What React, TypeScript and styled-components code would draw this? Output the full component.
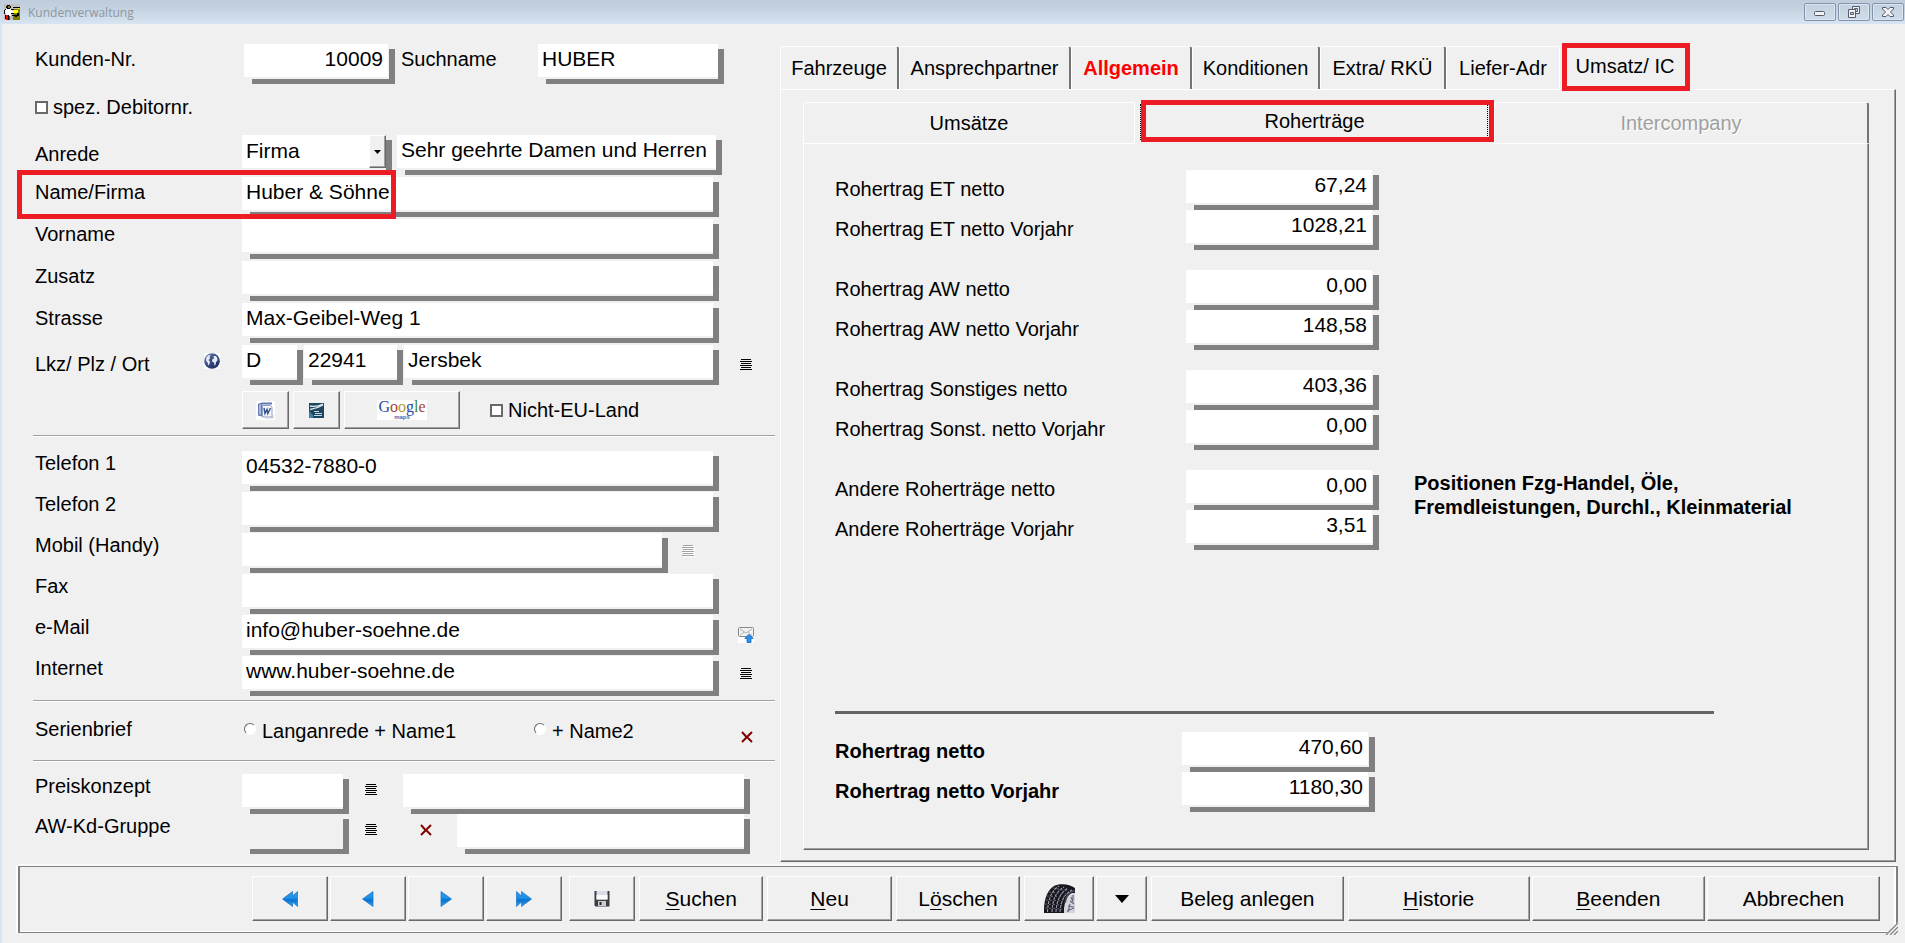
import React from 'react';
import styled, { createGlobalStyle, css } from 'styled-components';

const face = '#f0f0f0';
const shade = '#808080';
const mark = '#ed1c24';

const GlobalStyle = createGlobalStyle`
  *, *::before, *::after { box-sizing: border-box; }
  body { margin: 0; background: ${face}; }
  body, input, select, button { font-family: "Liberation Sans", Arial, sans-serif; color: #000; }
  svg { display: block; }
`;

/* ---------- window frame ---------- */

const Window = styled.div`
  display: flex;
  flex-direction: column;
  min-height: 100vh;
  min-width: 1480px;
  border-left: 2px solid #d7e4f2;
  background: ${face};
  font-size: 20px;
  line-height: 24px;
`;

const TitleBar = styled.header`
  display: flex;
  align-items: center;
  gap: 8px;
  height: 24px;
  margin-left: -2px;
  padding: 0 1px 0 4px;
  background: linear-gradient(#bfcddb, #c5d2e0 40%, #d7e4f2);
`;

const Title = styled.h1`
  flex: 1;
  margin: 0;
  padding-top: 2px;
  font: 400 12px/16px "Open Sans", "Noto Sans", sans-serif;
  color: #8e979f;
`;

const WindowButtons = styled.div`
  display: flex;
  gap: 2px;
`;

const WindowButton = styled.button`
  display: grid;
  place-items: center;
  width: 32px;
  height: 18px;
  padding: 0;
  border: 1px solid #8393ac;
  border-radius: 2px;
  background: linear-gradient(#c3d0de, #cfdcea);
  box-shadow: inset 0 0 0 1px #dbe6f1;
`;

const Main = styled.main`
  flex: 1;
  display: flex;
`;

/* ---------- shared controls ---------- */

const FieldFrame = styled.span<{ $w?: number; $gap?: number }>`
  display: flex;
  ${p => (p.$w ? css`flex: 0 0 ${p.$w}px;` : css`flex: 1;`)}
  min-width: 0;
  height: 40px;
  padding: 0 ${p => p.$gap ?? 6}px 7px 0;
  background:
    linear-gradient(${shade}, ${shade}) right bottom / 6px calc(100% - 5px) no-repeat,
    linear-gradient(${shade}, ${shade}) right bottom / calc(100% - 8px) 5px no-repeat;
`;

const Input = styled.input<{ $right?: boolean; $flat?: boolean }>`
  flex: 1;
  width: 100%;
  min-width: 0;
  height: 33px;
  padding: 0 5px 3px 4px;
  border: 0;
  border-radius: 0;
  outline: none;
  background: ${p => (p.$flat ? face : '#fff')};
  font-size: 21px;
  text-align: ${p => (p.$right ? 'right' : 'left')};
`;

const SelectBox = styled.span`
  position: relative;
  display: flex;
  flex: 1;
  height: 33px;
`;

const Select = styled.select`
  appearance: none;
  flex: 1;
  padding: 0 20px 3px 4px;
  border: 0;
  border-radius: 0;
  outline: none;
  background: #fff;
  font-size: 21px;
`;

const bevel = css`
  border: 1px solid;
  border-color: #fff #696969 #696969 #fff;
  box-shadow: inset -1px -1px 0 #a0a0a0;
  background: ${face};
`;

const SelectArrow = styled.span`
  position: absolute;
  top: 0;
  right: 0;
  bottom: 0;
  width: 17px;
  display: grid;
  place-items: center;
  pointer-events: none;
  ${bevel}
`;

const BevelButton = styled.button<{ $w: number; $h: number; $grow?: boolean }>`
  display: flex;
  align-items: center;
  justify-content: center;
  flex: ${p => (p.$grow ? `1 1 ${p.$w}px` : 'none')};
  width: ${p => p.$w}px;
  height: ${p => p.$h}px;
  padding: 0;
  border-radius: 0;
  font-size: 21px;
  line-height: 24px;
  white-space: nowrap;
  ${bevel}

  u { text-underline-offset: 3px; text-decoration-thickness: 1px; text-decoration-skip-ink: none; }
`;

const PlainButton = styled.button<{ $ml?: number; $top?: number }>`
  flex: none;
  padding: 0;
  border: 0;
  background: none;
  margin: ${p => p.$top ?? 14}px 0 0 ${p => p.$ml ?? 0}px;
  align-self: flex-start;
`;

const CheckLabel = styled.label<{ $ml?: number }>`
  display: flex;
  align-items: center;
  gap: 5px;
  margin-left: ${p => p.$ml ?? 0}px;
`;

const Checkbox = styled.input`
  appearance: none;
  width: 13px;
  height: 13px;
  margin: 0;
  border: 2px solid #696969;
  background: #fff;
`;

const Radio = styled.input`
  appearance: none;
  width: 12px;
  height: 12px;
  margin: 0 0 4px;
  border: 1px solid;
  border-color: #696969 #fff #fff #696969;
  border-radius: 50%;
  background: #fff;
`;

const highlight = css`
  content: '';
  position: absolute;
  z-index: 2;
  border: 5px solid ${mark};
  pointer-events: none;
`;

/* ---------- customer form ---------- */

const CustomerForm = styled.form`
  flex: 0 0 778px;
  padding: 20px 5px 0 33px;
`;

const RowStack = styled.div<{ $gap: number }>`
  display: flex;
  flex-direction: column;
  gap: ${p => p.$gap}px;
`;

const Row = styled.div<{ $marked?: boolean }>`
  position: relative;
  display: flex;
  ${p => p.$marked && css`
    &::after { ${highlight} left: -18px; top: -7px; width: 379px; height: 49px; }
  `}
`;

const RowLabel = styled.label<{ $top?: number; $w?: number }>`
  flex: 0 0 ${p => p.$w ?? 207}px;
  padding-top: ${p => p.$top ?? 3}px;
  white-space: nowrap;
`;

const FieldGroup = styled.div<{ $gap?: number; $w?: number }>`
  display: flex;
  flex: 0 0 ${p => p.$w ?? 477}px;
  gap: ${p => p.$gap ?? 0}px;
`;

const DebitorRow = styled.div`
  display: flex;
  margin: 11px 0 16px;
`;

const LabelWithIcon = styled.div`
  display: flex;
  flex: 0 0 207px;
`;

const LinkRow = styled.div`
  display: flex;
  align-items: center;
  gap: 4px;
  margin: 6px 0 6px 207px;
`;

const Separator = styled.hr<{ $mt?: number; $mb?: number }>`
  margin: ${p => p.$mt ?? 0}px 0 ${p => p.$mb ?? 0}px -2px;
  height: 2px;
  border: 0;
  border-top: 1px solid #a0a0a0;
  background: #fff;
`;

const MailingRow = styled.fieldset`
  display: flex;
  align-items: center;
  height: 58px;
  margin: 0;
  padding: 0;
  border: 0;
`;

const MailingTitle = styled.span`
  flex: 0 0 209px;
  margin-bottom: 4px;
`;

const RadioLabel = styled.label<{ $w: number }>`
  display: flex;
  align-items: center;
  gap: 6px;
  flex: 0 0 ${p => p.$w}px;
  white-space: nowrap;
`;

const GoogleLogo = styled.span`
  display: flex;
  flex-direction: column;
  align-items: center;
  width: 50px;
  height: 20px;
  background: #fff;
  font: 16px/14px "Liberation Serif", serif;
`;

const GoogleMaps = styled.small`
  font: 700 6px/6px "Liberation Sans", sans-serif;
  color: #4a68b0;
`;

const Letter = styled.span<{ $c: string }>`
  color: ${p => p.$c};
`;

/* ---------- tab control ---------- */

const TabControl = styled.section`
  flex: 1;
  display: flex;
  flex-direction: column;
  min-width: 0;
  margin: 22px 9px 4px 0;
`;

const TabList = styled.div<{ $h: number }>`
  display: flex;
  height: ${p => p.$h}px;
`;

const Tab = styled.button<{ $w: number; $grow?: boolean; $state?: 'alert' | 'selected' | 'disabled' | 'beforeSelected' }>`
  position: relative;
  flex: ${p => (p.$grow ? p.$w : 0)} 1 ${p => p.$w}px;
  padding: 0;
  border: 1px solid #fff;
  border-right: 2px solid #747474;
  border-bottom: 0;
  border-radius: 3px 3px 0 0;
  background: ${face};
  font-size: 20px;
  line-height: 24px;
  white-space: nowrap;

  ${p => p.$state === 'alert' && css`color: #f00; font-weight: 700;`}
  ${p => p.$state === 'disabled' && css`color: #a0a0a0; text-shadow: 1px 1px 0 #fff;`}
  ${p => p.$state === 'beforeSelected' && css`border-right: 1px solid #fff;`}
  ${p => p.$state === 'selected' && css`
    padding-bottom: 4px;
    border: 0;
    margin-bottom: -1px;
    z-index: 1;
    &::after { ${highlight} inset: -3px 0 -1px 2px; }
  `}
`;

const InnerTab = styled(Tab)`
  ${p => p.$state === 'selected' && css`
    &::before {
      content: '';
      position: absolute;
      inset: 2px 6px 4px 5px;
      border: 1px dotted #000;
    }
    &::after { inset: -2px 0 2px 6px; }
  `}
`;

const TabPanel = styled.div`
  flex: 1;
  display: flex;
  flex-direction: column;
  border: 1px solid #fff;
  border-right: 1px solid #696969;
  border-bottom: 1px solid #696969;
  box-shadow: inset -1px -1px 0 #a0a0a0;
`;

const OuterPanel = styled(TabPanel)`
  padding: 12px 26px 11px 22px;
`;

const InnerPanel = styled(TabPanel)`
  padding: 26px 30px 37px 31px;
`;

const YieldPair = styled.div`
  display: flex;
  margin-bottom: 20px;
`;

const YieldRows = styled.div`
  flex: none;
`;

const Note = styled.p`
  margin: 1px 0 0 35px;
  font-weight: 700;
`;

const YieldLabel = styled(RowLabel)<{ $bold?: boolean }>`
  font-weight: ${p => (p.$bold ? 700 : 400)};
`;

const TotalLine = styled.hr`
  height: 3px;
  margin: auto 124px 18px 0;
  border: 0;
  background: #646464;
`;

/* ---------- toolbar ---------- */

const Toolbar = styled.footer`
  position: relative;
  display: flex;
  gap: 4px;
  height: 67px;
  margin: 0 7px 10px 16px;
  padding: 9px 16px 0 232px;
  border: solid ${shade};
  border-width: 1px 2px;
  box-shadow: -2px 0 0 #fff, 0 -2px 0 #fafafa, inset -2px -1px 0 #fff;
`;

const ButtonGroup = styled.div<{ $w?: number }>`
  display: flex;
  gap: 2px;
  flex: ${p => (p.$w ? `1 1 ${p.$w}px` : 'none')};
`;

const NavGroup = styled(ButtonGroup)`
  padding-right: 3px;
`;

const Grip = styled.span`
  position: absolute;
  right: -2px;
  bottom: -3px;
`;

/* ---------- icons ---------- */

const AppIcon = () => (
  <svg width="16" height="16" viewBox="0 0 16 16" shapeRendering="crispEdges" aria-hidden="true">
    <rect width="16" height="16" fill="#c0c0c0" />
    <rect x="9" y="5" width="7" height="11" fill="#808000" />
    <path d="M3 1h3v1h1v2h-1v1h-3v-1h-1v-2h1z" fill="#000" />
    <rect x="4" y="2" width="2" height="2" fill="#808000" />
    <path d="M1 5h7v2h2v2h-3v3h-5v-3h-2v-3h1z" fill="#fff" />
    <path d="M0 6h1v4h-1zM1 5h1v1h-1zM7 5h3v1h-3zM7 9h3v1h-3zM9 3h7v1h-7zM8 11h5v2h-2v-1h-3zM13 9h2v3h-2z" fill="#000" />
    <path d="M9 6h5v3h-4zM14 4h1v1h-1z" fill="#ff0" />
    <path d="M2 11h2v5h-2zM5 12h1v4h-1z" fill="#f00" />
    <path d="M1 11h1v4h-1zM4 11h1v5h-1z" fill="#000" />
  </svg>
);

const MinimizeIcon = () => (
  <svg width="12" height="12" viewBox="0 0 12 12" aria-hidden="true">
    <rect x="0.5" y="5.5" width="10" height="4" rx="1" fill="#f2f2f2" stroke="#555b6b" />
  </svg>
);

const RestoreIcon = () => (
  <svg width="12" height="12" viewBox="0 0 12 12" aria-hidden="true">
    <path d="M4.500.5h7v7h-7z" fill="#f2f2f2" stroke="#555b6b" />
    <path d="M6.500 2.500h3v3h-3z" fill="#c8d5e3" stroke="#555b6b" />
    <path d="M.5 3.500h7v8h-7z" fill="#f2f2f2" stroke="#555b6b" />
    <path d="M2.500 6.500h3v2h-3z" fill="#c8d5e3" stroke="#555b6b" />
  </svg>
);

const CloseIcon = () => (
  <svg width="12" height="12" viewBox="0 0 12 12" aria-hidden="true">
    <path d="M.5 1.500h3.500l2 2 2-2h3.500v1.500l-3 3 3 3v1.500h-3.500l-2-2-2 2h-3.500v-1.500l3-3-3-3z" fill="#f2f2f2" stroke="#555b6b" />
  </svg>
);

const ListIcon = ({ muted = false }: { muted?: boolean }) => (
  <svg width="13" height="12" viewBox="0 0 13 12" shapeRendering="crispEdges" aria-hidden="true">
    {muted && <path d="M2 1h11v1h-11zM1 3h12v1h-12zM2 5h11v1h-11zM1 7h12v1h-12zM2 9h11v1h-11zM1 11h12v1h-12z" fill="#fff" />}
    <path d="M1 0h10v1h-10zM0 2h12v1h-12zM1 4h10v1h-10zM0 6h12v1h-12zM1 8h10v1h-10zM0 10h12v1h-12z" fill={muted ? '#a0a0a0' : '#000'} />
  </svg>
);

const DeleteIcon = () => (
  <svg width="12" height="12" viewBox="0 0 12 12" aria-hidden="true">
    <path d="M1 1l4 4.500 1.500 1L11 11M11 1L6.500 5.500 1 11" fill="none" stroke="#800000" strokeWidth="2" />
  </svg>
);

const GlobeIcon = () => (
  <svg width="16" height="16" viewBox="0 0 16 16" aria-hidden="true">
    <defs>
      <linearGradient id="globe" x1="0" y1="0" x2="1" y2="1">
        <stop offset="0" stopColor="#8b9ac4" />
        <stop offset="0.4" stopColor="#3d5088" />
        <stop offset="1" stopColor="#17245a" />
      </linearGradient>
    </defs>
    <rect width="16" height="16" fill="#fff" />
    <circle cx="8" cy="8" r="7.800" fill="url(#globe)" />
    <path d="M2.500 4l2.500-2 1.500.5-1 1.500.5 1.500-1.500 1.500 1.500 1.500-.5 2.500-1 1.500-1-3-1.500-2zM9.500 3l2.500 0 1.500 2.500 0 2-1.500 1.500-.5 3-1 .5-.5-3-2-1 .5-2.500 1.500-.5z" fill="#e4eaf6" />
  </svg>
);

const WordIcon = () => (
  <svg width="19" height="19" viewBox="0 0 19 19" aria-hidden="true">
    <rect width="19" height="19" fill="#fff" />
    <path d="M2 3l4-1.500h10v2H6v12l-4-1z" fill="#6379b4" />
    <path d="M3 4l2-1v11l-2-1z" fill="#a9b8dc" />
    <path d="M6.500 4.500h8l1.500 1.500v10h-9.500z" fill="#f3f6fb" stroke="#8f9fc0" />
    <path d="M8 7l1 5.500 2-4 .8 4 2.700-5.500" fill="none" stroke="#34508f" strokeWidth="1.400" />
    <path d="M16 14h1.500v3.500h-8v-1h6.500z" fill="#c4c9d2" />
  </svg>
);

const WriterIcon = () => (
  <svg width="15" height="15" viewBox="0 0 15 15" aria-hidden="true">
    <rect width="15" height="15" fill="#1d4560" />
    <path d="M1 6.500C5 6 9 5 14 2M1 3c4 1 8 .5 13-2" stroke="#d7e6ee" strokeWidth="1.300" fill="none" />
    <path d="M5 8.500h5M6 10.500h7M5 12.500h8" stroke="#c3d9e5" />
    <path d="M0 8l4 4v3H0z" fill="#3f7fa5" />
  </svg>
);

const MailIcon = () => (
  <svg width="16" height="16" viewBox="0 0 16 16" aria-hidden="true">
    <rect y="9" width="16" height="7" fill="#fff" />
    <rect x="0.5" y="0.5" width="15" height="9" rx="1" fill="#f1f1f1" stroke="#8a8a8a" />
    <path d="M2 2l6 4 6-4M2 8.500l4-3.500M14 8.500l-4-3.500" fill="none" stroke="#b0b0b0" />
    <path d="M11 7.200l4.200 4.300h-2.200v4h-4v-4H6.800z" fill="#2a8fee" stroke="#1668c0" strokeWidth="0.800" />
  </svg>
);

const NavDefs = () => (
  <defs>
    <linearGradient id="nav" x1="0" y1="0" x2="0" y2="1">
      <stop offset="0" stopColor="#2f9be8" />
      <stop offset="0.450" stopColor="#1b8fe8" />
      <stop offset="0.550" stopColor="#0a6fd0" />
      <stop offset="1" stopColor="#2aa6f4" />
    </linearGradient>
  </defs>
);

const NavIcon = ({ back = false, double = false }: { back?: boolean; double?: boolean }) => (
  <svg width="16" height="16" viewBox="0 0 16 16" aria-hidden="true">
    <NavDefs />
    <g transform={back ? 'matrix(-1 0 0 1 16 0)' : undefined} fill="url(#nav)" stroke="#1a6fc4" strokeWidth="0.700">
      {double ? (
        <path d="M.5.5L5.500 5V.5L15.500 8 5.500 15.500V11L.5 15.500z" />
      ) : (
        <path d="M3 .5L13.500 8 3 15.500z" />
      )}
    </g>
  </svg>
);

const SaveIcon = () => (
  <svg width="16" height="16" viewBox="0 0 16 16" aria-hidden="true">
    <path d="M.5 0h15v15.500h-14l-1-1z" fill="#3a3d42" />
    <rect x="2.500" width="11" height="8.500" fill="#d9dee6" />
    <rect x="2.500" y="4" width="11" height="4.500" fill="#f8fafc" />
    <rect x="4" y="10" width="8" height="5" fill="#c9ccd0" />
    <rect x="5.500" y="11" width="2" height="3" fill="#222" />
  </svg>
);

const TireIcon = () => (
  <svg width="31" height="29" viewBox="0 0 31 29" aria-hidden="true">
    <path d="M0 29C-.5 17 3 5 11 1.500 17-1 26 0 31 4v5c-6-1-11 6-11 20z" fill="#17171d" />
    <path d="M31 9c-6-1-10 7-11 20h11z" fill="#d5d5de" />
    <path d="M31 7c-5-1-9 5-10 12" fill="none" stroke="#4b4b58" strokeWidth="1.500" />
    <path d="M3.500 28C4 16 7 7 15 2M8 28C8.500 17 11 8 20 3M12 28c.5-11 4-19 12-24M16 28c.5-10 4-18 12-22" fill="none" stroke="#9c9cb0" strokeWidth="1.100" strokeDasharray="3 1" />
    <path d="M1 24l17 1M1 20l17 1M2 16l17 1M3 12l17 1M5 8l17 2M9 4l15 3" stroke="#707084" strokeWidth="0.900" strokeDasharray="2 2" />
    <path d="M23 27l7-3M24 22l6 1M26 17l4 3M27 13l2 5M29 11v5M24 28l2-8" stroke="#686878" strokeWidth="1.200" />
  </svg>
);

const DownIcon = ({ w, h }: { w: number; h: number }) => (
  <svg width={w} height={h} viewBox="0 0 14 8" aria-hidden="true">
    <path d="M0 0h14L7 8z" fill="#000" />
  </svg>
);

const GripIcon = () => (
  <svg width="13" height="13" viewBox="0 0 13 13" aria-hidden="true">
    <path d="M0 13h13V0z" fill={face} />
    <path d="M1 13L13 1M5 13l8-8M9 13l4-4" stroke="#8c8c8c" strokeWidth="1.500" />
    <path d="M3 13L13 3M7 13l6-6M11 13l2-2" stroke="#fff" />
  </svg>
);

/* ---------- composed parts ---------- */

type FieldProps = {
  id: string;
  w?: number;
  value?: string;
  right?: boolean;
  flat?: boolean;
  gap?: number;
  label?: string;
};

const Field = ({ id, w, value = '', right, flat, gap, label }: FieldProps) => (
  <FieldFrame $w={w} $gap={gap}>
    <Input id={id} name={id} defaultValue={value} $right={right} $flat={flat} aria-label={label} />
  </FieldFrame>
);

type YieldLine = [id: string, label: string, value: string];

const yieldPairs: YieldLine[][] = [
  [['et', 'Rohertrag ET netto', '67,24'], ['etv', 'Rohertrag ET netto Vorjahr', '1028,21']],
  [['aw', 'Rohertrag AW netto', '0,00'], ['awv', 'Rohertrag AW netto Vorjahr', '148,58']],
  [['so', 'Rohertrag Sonstiges netto', '403,36'], ['sov', 'Rohertrag Sonst. netto Vorjahr', '0,00']],
  [['an', 'Andere Roherträge netto', '0,00'], ['anv', 'Andere Roherträge Vorjahr', '3,51']],
];

const totals: YieldLine[] = [
  ['sum', 'Rohertrag netto', '470,60'],
  ['sumv', 'Rohertrag netto Vorjahr', '1180,30'],
];

const YieldRow = ({ line: [id, label, value], total }: { line: YieldLine; total?: boolean }) => (
  <Row>
    <YieldLabel htmlFor={id} $top={7} $w={total ? 347 : 351} $bold={total}>{label}</YieldLabel>
    <Field id={id} w={193} gap={7} value={value} right />
  </Row>
);

const CustomerPanel = () => (
  <CustomerForm onSubmit={e => e.preventDefault()}>
    <Row>
      <RowLabel htmlFor="nr" $w={209}>Kunden-Nr.</RowLabel>
      <Field id="nr" w={151} gap={7} value="10009" right />
      <RowLabel as="span" $w={6} />
      <RowLabel htmlFor="such" $w={137}>Suchname</RowLabel>
      <Field id="such" w={186} value="HUBER" />
    </Row>
    <DebitorRow>
      <CheckLabel><Checkbox type="checkbox" />spez. Debitornr.</CheckLabel>
    </DebitorRow>

    <RowStack $gap={2}>
      <Row>
        <RowLabel htmlFor="anrede" $top={7}>Anrede</RowLabel>
        <FieldGroup $gap={5} $w={480}>
          <FieldFrame $w={150}>
            <SelectBox>
              <Select id="anrede" defaultValue="Firma">
                <option>Firma</option>
              </Select>
              <SelectArrow><DownIcon w={7} h={4} /></SelectArrow>
            </SelectBox>
          </FieldFrame>
          <Field id="briefanrede" label="Briefanrede" value="Sehr geehrte Damen und Herren" />
        </FieldGroup>
      </Row>
      <Row $marked>
        <RowLabel htmlFor="name">Name/Firma</RowLabel>
        <FieldGroup><Field id="name" value="Huber & Söhne" /></FieldGroup>
      </Row>
      <Row>
        <RowLabel htmlFor="vorname">Vorname</RowLabel>
        <FieldGroup><Field id="vorname" /></FieldGroup>
      </Row>
      <Row>
        <RowLabel htmlFor="zusatz">Zusatz</RowLabel>
        <FieldGroup><Field id="zusatz" /></FieldGroup>
      </Row>
      <Row>
        <RowLabel htmlFor="strasse">Strasse</RowLabel>
        <FieldGroup><Field id="strasse" value="Max-Geibel-Weg 1" /></FieldGroup>
      </Row>
      <Row>
        <LabelWithIcon>
          <RowLabel htmlFor="lkz" $top={7} $w={169}>Lkz/ Plz / Ort</RowLabel>
          <PlainButton type="button" aria-label="Karte" $top={8}><GlobeIcon /></PlainButton>
        </LabelWithIcon>
        <FieldGroup $gap={1}>
          <Field id="lkz" w={61} value="D" />
          <Field id="plz" w={99} label="Plz" value="22941" />
          <Field id="ort" label="Ort" value="Jersbek" />
        </FieldGroup>
        <PlainButton type="button" aria-label="Ort auswählen" $ml={21}><ListIcon /></PlainButton>
      </Row>
    </RowStack>

    <LinkRow>
      <BevelButton type="button" $w={47} $h={38} aria-label="Word"><WordIcon /></BevelButton>
      <BevelButton type="button" $w={47} $h={38} aria-label="Writer"><WriterIcon /></BevelButton>
      <BevelButton type="button" $w={116} $h={38}>
        <GoogleLogo>
          <span>
            <Letter $c="#2c4a9c">G</Letter><Letter $c="#a8432f">o</Letter><Letter $c="#b59a2e">o</Letter>
            <Letter $c="#2c4a9c">g</Letter><Letter $c="#3a8a3e">l</Letter><Letter $c="#a8432f">e</Letter>
          </span>
          <GoogleMaps>maps</GoogleMaps>
        </GoogleLogo>
      </BevelButton>
      <CheckLabel $ml={26}><Checkbox type="checkbox" />Nicht-EU-Land</CheckLabel>
    </LinkRow>
    <Separator $mb={14} />

    <RowStack $gap={1}>
      <Row>
        <RowLabel htmlFor="tel1" $top={0}>Telefon 1</RowLabel>
        <FieldGroup><Field id="tel1" value="04532-7880-0" /></FieldGroup>
      </Row>
      <Row>
        <RowLabel htmlFor="tel2" $top={0}>Telefon 2</RowLabel>
        <FieldGroup><Field id="tel2" /></FieldGroup>
      </Row>
      <Row>
        <RowLabel htmlFor="mobil" $top={0}>Mobil (Handy)</RowLabel>
        <FieldGroup $w={426}><Field id="mobil" /></FieldGroup>
        <PlainButton type="button" disabled aria-label="SMS senden" $ml={14} $top={12}><ListIcon muted /></PlainButton>
      </Row>
      <Row>
        <RowLabel htmlFor="fax" $top={0}>Fax</RowLabel>
        <FieldGroup><Field id="fax" /></FieldGroup>
      </Row>
      <Row>
        <RowLabel htmlFor="email" $top={0}>e-Mail</RowLabel>
        <FieldGroup><Field id="email" value="info@huber-soehne.de" /></FieldGroup>
        <PlainButton type="button" aria-label="E-Mail senden" $ml={19} $top={12}><MailIcon /></PlainButton>
      </Row>
      <Row>
        <RowLabel htmlFor="web" $top={0}>Internet</RowLabel>
        <FieldGroup><Field id="web" value="www.huber-soehne.de" /></FieldGroup>
        <PlainButton type="button" aria-label="Internetseite öffnen" $ml={21} $top={12}><ListIcon /></PlainButton>
      </Row>
    </RowStack>
    <Separator $mt={4} />

    <MailingRow aria-label="Serienbrief">
      <MailingTitle>Serienbrief</MailingTitle>
      <RadioLabel $w={290}><Radio type="radio" name="serie" />Langanrede + Name1</RadioLabel>
      <RadioLabel $w={207}><Radio type="radio" name="serie" />+ Name2</RadioLabel>
      <PlainButton type="button" aria-label="Auswahl löschen" $top={29}><DeleteIcon /></PlainButton>
    </MailingRow>
    <Separator $mb={12} />

    <Row>
      <RowLabel htmlFor="preis" $top={0}>Preiskonzept</RowLabel>
      <Field id="preis" w={107} />
      <PlainButton type="button" aria-label="Preiskonzept auswählen" $ml={16} $top={10}><ListIcon /></PlainButton>
      <FieldGroup $w={372}>
        <RowLabel as="span" $w={25} />
        <Field id="preistext" label="Preiskonzept Text" />
      </FieldGroup>
    </Row>
    <Row>
      <RowLabel htmlFor="gruppe" $top={0}>AW-Kd-Gruppe</RowLabel>
      <Field id="gruppe" w={107} flat />
      <PlainButton type="button" aria-label="Gruppe auswählen" $ml={16} $top={10}><ListIcon /></PlainButton>
      <PlainButton type="button" aria-label="Gruppe löschen" $ml={42} $top={10}><DeleteIcon /></PlainButton>
      <FieldGroup $w={318}>
        <RowLabel as="span" $w={25} />
        <Field id="gruppetext" label="Gruppe Text" />
      </FieldGroup>
    </Row>
  </CustomerForm>
);

const YieldPanel = () => (
  <InnerPanel role="tabpanel">
    {yieldPairs.map((pair, i) => (
      <YieldPair key={pair[0][0]}>
        <YieldRows>
          {pair.map(line => <YieldRow key={line[0]} line={line} />)}
        </YieldRows>
        {i === 3 && (
          <Note>
            Positionen Fzg-Handel, Öle,<br />Fremdleistungen, Durchl., Kleinmaterial
          </Note>
        )}
      </YieldPair>
    ))}
    <TotalLine />
    {totals.map(line => <YieldRow key={line[0]} line={line} total />)}
  </InnerPanel>
);

const App = () => (
  <>
    <GlobalStyle />
    <Window>
      <TitleBar>
        <AppIcon />
        <Title>Kundenverwaltung</Title>
        <WindowButtons>
          <WindowButton aria-label="Minimieren"><MinimizeIcon /></WindowButton>
          <WindowButton aria-label="Wiederherstellen"><RestoreIcon /></WindowButton>
          <WindowButton aria-label="Schließen"><CloseIcon /></WindowButton>
        </WindowButtons>
      </TitleBar>

      <Main>
        <CustomerPanel />
        <TabControl>
          <TabList role="tablist" $h={43}>
            <Tab role="tab" $w={119}>Fahrzeuge</Tab>
            <Tab role="tab" $w={172}>Ansprechpartner</Tab>
            <Tab role="tab" $w={121} $state="alert">Allgemein</Tab>
            <Tab role="tab" $w={128}>Konditionen</Tab>
            <Tab role="tab" $w={126}>Extra/ RKÜ</Tab>
            <Tab role="tab" $w={114} $state="beforeSelected">Liefer-Adr</Tab>
            <Tab role="tab" $w={130} $state="selected" aria-selected>Umsatz/ IC</Tab>
          </TabList>
          <OuterPanel>
            <TabList role="tablist" $h={41}>
              <InnerTab role="tab" $grow $w={332} $state="beforeSelected">Umsätze</InnerTab>
              <InnerTab role="tab" $grow $w={359} $state="selected" aria-selected>Roherträge</InnerTab>
              <InnerTab role="tab" $grow $w={375} $state="disabled" disabled>Intercompany</InnerTab>
            </TabList>
            <YieldPanel />
          </OuterPanel>
        </TabControl>
      </Main>

      <Toolbar>
        <NavGroup>
          <BevelButton $w={76} $h={45} aria-label="Erster"><NavIcon back double /></BevelButton>
          <BevelButton $w={76} $h={45} aria-label="Zurück"><NavIcon back /></BevelButton>
          <BevelButton $w={76} $h={45} aria-label="Weiter"><NavIcon /></BevelButton>
          <BevelButton $w={76} $h={45} aria-label="Letzter"><NavIcon double /></BevelButton>
        </NavGroup>
        <BevelButton $w={66} $h={45} aria-label="Speichern"><SaveIcon /></BevelButton>
        <BevelButton $w={124} $h={45} $grow><u>S</u>uchen</BevelButton>
        <BevelButton $w={124} $h={45} $grow><u>N</u>eu</BevelButton>
        <BevelButton $w={124} $h={45} $grow>L<u>ö</u>schen</BevelButton>
        <ButtonGroup>
          <BevelButton $w={70} $h={45} aria-label="Reifen"><TireIcon /></BevelButton>
          <BevelButton $w={51} $h={45} aria-label="Mehr"><DownIcon w={14} h={8} /></BevelButton>
        </ButtonGroup>
        <BevelButton $w={192} $h={45} $grow>Beleg anlegen</BevelButton>
        <ButtonGroup $w={532}>
          <BevelButton $w={182} $h={45} $grow><u>H</u>istorie</BevelButton>
          <BevelButton $w={173} $h={45} $grow><u>B</u>eenden</BevelButton>
          <BevelButton $w={173} $h={45} $grow>Abbrechen</BevelButton>
        </ButtonGroup>
        <Grip><GripIcon /></Grip>
      </Toolbar>
    </Window>
  </>
);

export default App;
